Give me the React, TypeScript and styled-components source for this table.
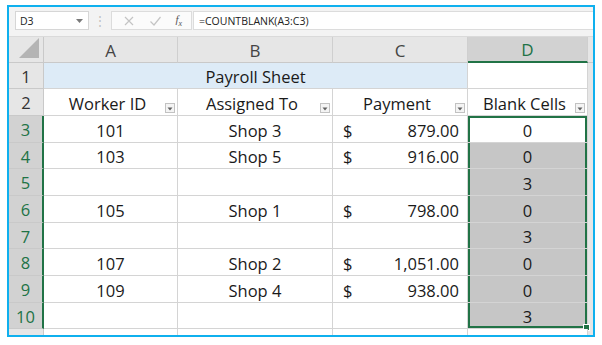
import styled, { createGlobalStyle } from "styled-components";

const GlobalStyle = createGlobalStyle`
    html, body {
        margin: 0;
        padding: 0;
        background: #ffffff;
    }
    body {
        font-family: "Open Sans", "Noto Sans", Arial, sans-serif;
    }
`;

const COLS = "35px 134px 155px 135px 120px 5px";

type SelPart = "top" | "mid" | "bottom" | undefined;

interface Row {
    n: number;
    h: number;
    a?: string;
    b?: string;
    c?: string;
    d: string;
}

const rows: Row[] = [
    { n: 3, h: 27, a: "101", b: "Shop 3", c: "879.00", d: "0" },
    { n: 4, h: 26, a: "103", b: "Shop 5", c: "916.00", d: "0" },
    { n: 5, h: 27, d: "3" },
    { n: 6, h: 27, a: "105", b: "Shop 1", c: "798.00", d: "0" },
    { n: 7, h: 26, d: "3" },
    { n: 8, h: 27, a: "107", b: "Shop 2", c: "1,051.00", d: "0" },
    { n: 9, h: 27, a: "109", b: "Shop 4", c: "938.00", d: "0" },
    { n: 10, h: 26, d: "3" },
];

function FilterButton() {
    return (
        <Filter>
            <svg width="6" height="4" viewBox="0 0 6 4">
                <path d="M0.5 0.5 L5.5 0.5 L3 3.5 Z" fill="#606060" />
            </svg>
        </Filter>
    );
}

export default function App() {
    return (
        <>
            <GlobalStyle />
            <Frame>
                <FormulaBar>
                    <NameBox>
                        <span>D3</span>
                        <svg width="7" height="4" viewBox="0 0 7 4">
                            <path d="M0 0 L7 0 L3.5 4 Z" fill="#7a7a7a" />
                        </svg>
                    </NameBox>
                    <Grip>⋮</Grip>
                    <ActionBox>
                        <svg width="12" height="12" viewBox="0 0 12 12">
                            <path d="M2 2 L10 10 M10 2 L2 10" stroke="#c4c4c4" strokeWidth="1.2" />
                        </svg>
                        <svg width="13" height="12" viewBox="0 0 13 12">
                            <path d="M1.5 6.5 L5 10 L11.5 2" stroke="#c4c4c4" strokeWidth="1.2" fill="none" />
                        </svg>
                        <Fx>
                            f<sub>x</sub>
                        </Fx>
                    </ActionBox>
                    <FormulaInput>=COUNTBLANK(A3:C3)</FormulaInput>
                </FormulaBar>

                <Sheet>
                    <GridRow $h={26}>
                        <Corner>
                            <svg width="22" height="22" viewBox="0 0 22 22">
                                <path d="M21 1 L21 21 L1 21 Z" fill="#b4b4b4" />
                            </svg>
                        </Corner>
                        <ColHead>A</ColHead>
                        <ColHead>B</ColHead>
                        <ColHead>C</ColHead>
                        <ColHead $active>D</ColHead>
                        <ColHead $edge />
                    </GridRow>

                    <GridRow $h={26}>
                        <RowHead>1</RowHead>
                        <TitleCell>Payroll Sheet</TitleCell>
                        <Cell />
                        <Edge />
                    </GridRow>

                    <GridRow $h={27}>
                        <RowHead>2</RowHead>
                        <Cell $center $pad>
                            Worker ID
                            <FilterButton />
                        </Cell>
                        <Cell $center $pad>
                            Assigned To
                            <FilterButton />
                        </Cell>
                        <Cell $center $pad>
                            Payment
                            <FilterButton />
                        </Cell>
                        <Cell $center $pad>
                            Blank Cells
                            <FilterButton />
                        </Cell>
                        <Edge />
                    </GridRow>

                    {rows.map((r, i) => {
                        const sel: SelPart = i === 0 ? "top" : i === rows.length - 1 ? "bottom" : "mid";
                        return (
                            <GridRow key={r.n} $h={r.h}>
                                <RowHead $active>{r.n}</RowHead>
                                <Cell $center>{r.a}</Cell>
                                <Cell $center>{r.b}</Cell>
                                <MoneyCell>
                                    {r.c && (
                                        <>
                                            <span>$</span>
                                            <span>{r.c}</span>
                                        </>
                                    )}
                                </MoneyCell>
                                <Cell $center $sel={sel} $shade={i !== 0}>
                                    {r.d}
                                    {sel === "bottom" && <Handle />}
                                </Cell>
                                <Edge />
                            </GridRow>
                        );
                    })}

                    <GridRow $h={8}>
                        <RowHead />
                        <Cell />
                        <Cell />
                        <Cell />
                        <Cell />
                        <Edge />
                    </GridRow>
                </Sheet>
            </Frame>
        </>
    );
}

const Frame = styled.div`
    margin: 5px 0 0 7px;
    width: 584px;
    height: 328px;
    border: 2px solid #0fb0ee;
    background: #e6e6e6;
    overflow: hidden;
    display: flex;
    flex-direction: column;
`;

const FormulaBar = styled.div`
    height: 30px;
    flex-shrink: 0;
    display: flex;
    align-items: center;
    padding: 0 0 2px 6px;
    box-sizing: border-box;
    background: #f3f3f3;
    border-bottom: 1px solid #dadada;
    font-size: 10.5px;
    color: #222;
`;

const NameBox = styled.div`
    width: 74px;
    height: 19px;
    box-sizing: border-box;
    border: 1px solid #d6d6d6;
    background: #ffffff;
    display: flex;
    align-items: center;
    justify-content: space-between;
    padding: 0 5px 0 4px;
`;

const Grip = styled.span`
    width: 22px;
    text-align: center;
    color: #c0c0c0;
    font-size: 12px;
`;

const ActionBox = styled.div`
    width: 81px;
    height: 19px;
    box-sizing: border-box;
    border: 1px solid #dcdcdc;
    background: #fbfbfb;
    display: flex;
    align-items: center;
    justify-content: space-around;
    padding: 0 2px 0 4px;
`;

const Fx = styled.span`
    font-family: "Liberation Serif", "DejaVu Serif", serif;
    font-style: italic;
    font-size: 11px;
    color: #555;
    sub {
        font-size: 8px;
    }
`;

const FormulaInput = styled.div`
    flex: 1;
    height: 19px;
    margin-left: 1px;
    box-sizing: border-box;
    border: 1px solid #dcdcdc;
    border-right: none;
    background: #ffffff;
    display: flex;
    align-items: center;
    padding-left: 5px;
`;

const Sheet = styled.div`
    display: flex;
    flex-direction: column;
    flex-shrink: 0;
    background: #ffffff;
    font-size: 16.5px;
    color: #1a1a1a;
`;

const GridRow = styled.div<{ $h: number }>`
    display: grid;
    grid-template-columns: ${COLS};
    height: ${(p) => p.$h}px;
    flex-shrink: 0;
`;

const Corner = styled.div`
    background: #e6e6e6;
    border-right: 1px solid #c9c9c9;
    border-bottom: 1px solid #c9c9c9;
    display: flex;
    align-items: flex-end;
    justify-content: flex-end;
    padding: 0 3px 3px 0;
    svg {
        display: block;
    }
`;

const ColHead = styled.div<{ $active?: boolean; $edge?: boolean }>`
    background: ${(p) => (p.$active ? "#d2d2d2" : "#e6e6e6")};
    border-right: ${(p) => (p.$edge ? "none" : "1px solid #cfcfcf")};
    border-bottom: ${(p) => (p.$active ? "2px solid #217346" : "1px solid #c9c9c9")};
    color: ${(p) => (p.$active ? "#217346" : "#444")};
    display: flex;
    align-items: center;
    justify-content: center;
    font-size: 17px;
    padding-top: 1px;
`;

const RowHead = styled.div<{ $active?: boolean }>`
    background: ${(p) => (p.$active ? "#d2d2d2" : "#e6e6e6")};
    border-right: ${(p) => (p.$active ? "2px solid #217346" : "1px solid #c9c9c9")};
    border-bottom: 1px solid #c9c9c9;
    color: ${(p) => (p.$active ? "#217346" : "#333")};
    display: flex;
    align-items: center;
    justify-content: center;
    font-size: 16.5px;
    padding-top: 1px;
`;

const selShadow = (s: SelPart) => {
    if (s === "top") return "inset 2px 2px 0 #217346, inset -2px 0 0 #217346";
    if (s === "mid") return "inset 2px 0 0 #217346, inset -2px 0 0 #217346";
    if (s === "bottom") return "inset 2px 0 0 #217346, inset -2px -2px 0 #217346";
    return "none";
};

const Cell = styled.div<{ $center?: boolean; $pad?: boolean; $sel?: SelPart; $shade?: boolean }>`
    position: relative;
    border-right: 1px solid #d4d4d4;
    border-bottom: 1px solid #d4d4d4;
    background: ${(p) => (p.$shade ? "#c6c6c6" : "#ffffff")};
    box-shadow: ${(p) => selShadow(p.$sel)};
    display: flex;
    align-items: center;
    justify-content: ${(p) => (p.$center ? "center" : "flex-start")};
    padding-right: ${(p) => (p.$pad ? "6px" : "0")};
    padding-top: 2px;
    white-space: nowrap;
`;

const TitleCell = styled(Cell)`
    grid-column: span 3;
    background: #ddebf7;
    justify-content: center;
`;

const MoneyCell = styled(Cell)`
    justify-content: space-between;
    padding: 2px 8px 0 10px;
`;

const Edge = styled.div`
    background: #e6e6e6;
`;

const Filter = styled.span`
    position: absolute;
    right: 2px;
    bottom: 2px;
    width: 10px;
    height: 10px;
    box-sizing: border-box;
    border: 1px solid #c2c2c2;
    background: #f4f4f4;
    display: flex;
    align-items: center;
    justify-content: center;
    svg {
        display: block;
        margin-top: 1px;
    }
`;

const Handle = styled.span`
    position: absolute;
    right: -3px;
    bottom: -3px;
    width: 5px;
    height: 5px;
    background: #217346;
    border: 1px solid #ffffff;
`;
